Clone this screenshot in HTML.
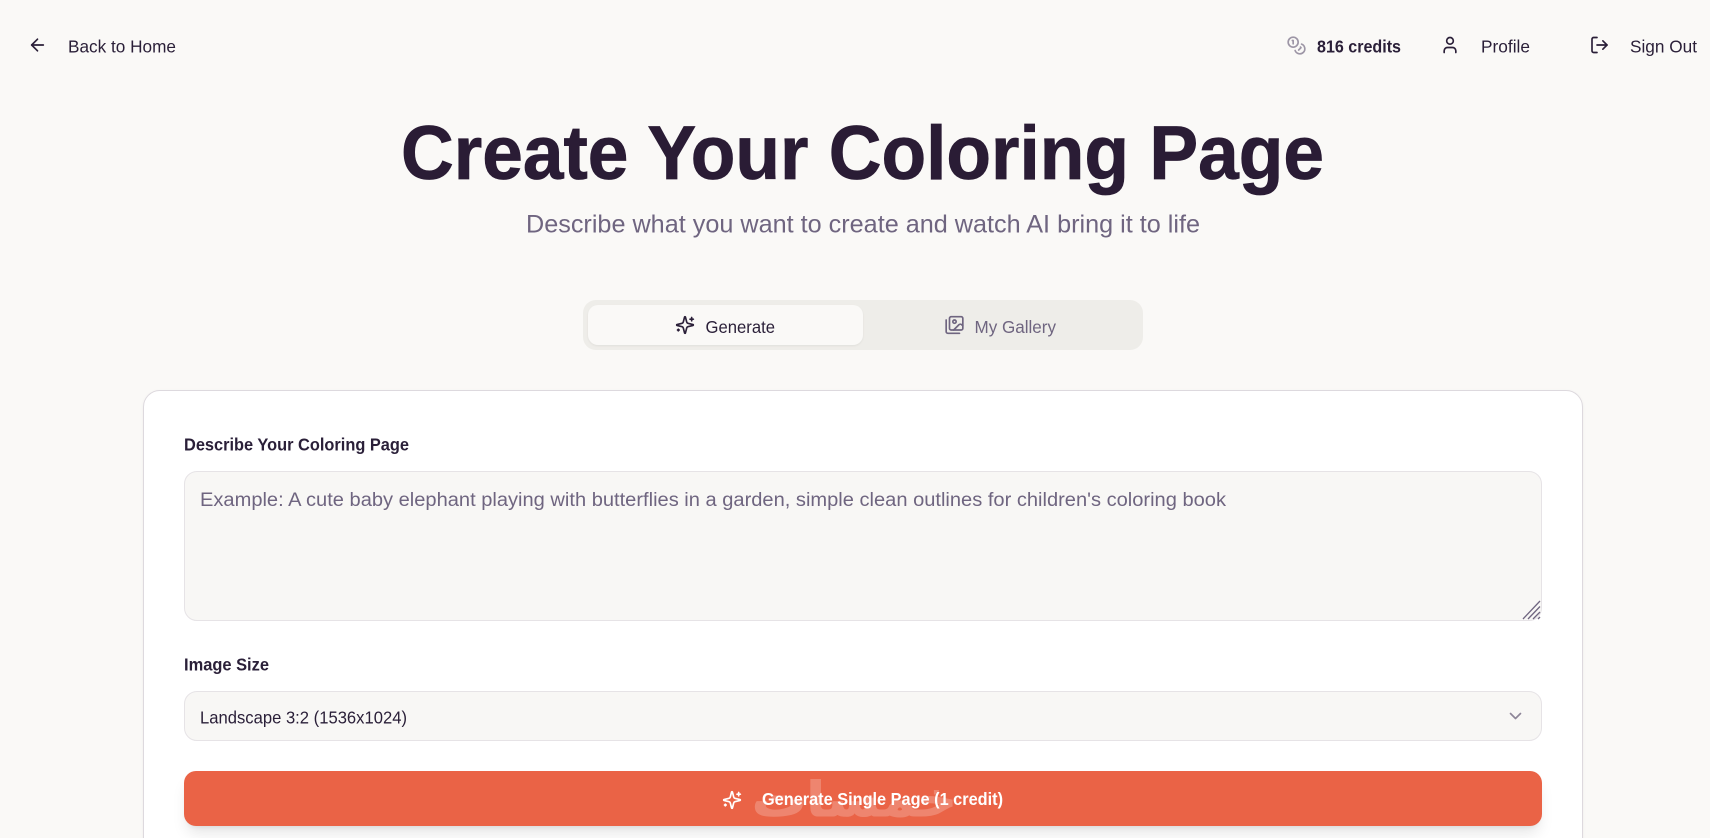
<!DOCTYPE html>
<html lang="en">
<head>
<meta charset="utf-8">
<title>Create Your Coloring Page</title>
<style>
html,body{margin:0;padding:0;background:#faf9f7}
#page{position:relative;width:1710px;height:838px;overflow:hidden;background:#faf9f7}
.box{position:absolute;box-sizing:border-box}
svg{position:absolute;left:0;top:0}
svg text{font-family:"Liberation Sans",sans-serif;fill:#2a1f38}
.ic{fill:none;stroke:#2a1f38;stroke-width:2;stroke-linecap:round;stroke-linejoin:round}
</style>
</head>
<body>
<div id="page">
<div class="box" style="left:583px;top:300px;width:560px;height:50px;background:#eeede9;border-radius:13px"></div>
<div class="box" style="left:588px;top:305px;width:275px;height:40px;background:#faf9f7;border-radius:10px;box-shadow:0 1px 2px rgba(0,0,0,.06)"></div>
<div class="box" style="left:143px;top:390px;width:1440px;height:470px;background:#fff;border:1px solid #ddd9de;border-radius:17px;box-shadow:0 1px 3px rgba(0,0,0,.05)"></div>
<div class="box" style="left:184px;top:471px;width:1358px;height:150px;background:#f8f7f5;border:1px solid #e6e3e6;border-radius:13px"></div>
<div class="box" style="left:184px;top:691px;width:1358px;height:50px;background:#f8f7f5;border:1px solid #e6e3e6;border-radius:13px"></div>
<div class="box" style="left:184px;top:771px;width:1358px;height:55px;background:#ea6346;border-radius:12px;box-shadow:0 10px 15px -3px rgba(0,0,0,.1),0 4px 6px -4px rgba(0,0,0,.1)"></div>

<svg width="1710" height="838" viewBox="0 0 1710 838" xmlns="http://www.w3.org/2000/svg">
<text x="68" y="52.5" font-size="17.5" textLength="108" lengthAdjust="spacingAndGlyphs">Back to Home</text>
<text x="1317" y="52.5" font-size="17.5" font-weight="700" textLength="84" lengthAdjust="spacingAndGlyphs">816 credits</text>
<text x="1481" y="52.5" font-size="17.5" textLength="49" lengthAdjust="spacingAndGlyphs">Profile</text>
<text x="1630" y="52.5" font-size="17.5" textLength="67" lengthAdjust="spacingAndGlyphs">Sign Out</text>

<text x="401" y="179" font-size="76" font-weight="700" stroke="#2a1c35" stroke-width=".8" textLength="923" lengthAdjust="spacingAndGlyphs" style="fill:#2a1c35">Create Your Coloring Page</text>
<text x="526" y="232.5" font-size="25" style="fill:#6f6580" textLength="674" lengthAdjust="spacingAndGlyphs">Describe what you want to create and watch AI bring it to life</text>

<text x="705.5" y="333" font-size="17.5" textLength="69.5" lengthAdjust="spacingAndGlyphs">Generate</text>
<text x="974.5" y="333" font-size="17.5" style="fill:#6f6580" textLength="81.5" lengthAdjust="spacingAndGlyphs">My Gallery</text>

<text x="184" y="450.5" font-size="17.5" font-weight="700" textLength="225" lengthAdjust="spacingAndGlyphs">Describe Your Coloring Page</text>
<text x="200" y="506" font-size="19" style="fill:#6f6580" textLength="1026" lengthAdjust="spacingAndGlyphs">Example: A cute baby elephant playing with butterflies in a garden, simple clean outlines for children's coloring book</text>
<text x="184" y="670.5" font-size="17.5" font-weight="700" textLength="85" lengthAdjust="spacingAndGlyphs">Image Size</text>
<text x="200" y="723.5" font-size="17.5" textLength="207" lengthAdjust="spacingAndGlyphs">Landscape 3:2 (1536x1024)</text>

<text x="957" y="816" font-size="48" font-weight="700" opacity=".22" direction="rtl" textLength="205" lengthAdjust="spacingAndGlyphs" stroke="#fff" stroke-width="1" style="fill:#fff;font-family:'DejaVu Sans',sans-serif">خمسات</text>
<text x="762" y="805" font-size="17.5" font-weight="700" style="fill:#fff" textLength="241" lengthAdjust="spacingAndGlyphs">Generate Single Page (1 credit)</text>

<!-- arrow-left -->
<g class="ic" transform="translate(27.5 35) scale(.8333)"><path d="m12 19-7-7 7-7"/><path d="M19 12H5"/></g>
<!-- coins -->
<g class="ic" transform="translate(1286.5 35.5) scale(.8333)" style="stroke:#9d96a6"><circle cx="8" cy="8" r="6"/><path d="M18.09 10.37A6 6 0 1 1 10.34 18"/><path d="M7 6h1v4"/><path d="m16.71 13.88.7.71-2.82 2.82"/></g>
<!-- user -->
<g class="ic" transform="translate(1440 35) scale(.8333)"><path d="M19 21v-2a4 4 0 0 0-4-4H9a4 4 0 0 0-4 4v2"/><circle cx="12" cy="7" r="4"/></g>
<!-- log-out -->
<g class="ic" transform="translate(1589.5 35) scale(.8333)"><path d="m16 17 5-5-5-5"/><path d="M21 12H9"/><path d="M9 21H5a2 2 0 0 1-2-2V5a2 2 0 0 1 2-2h4"/></g>
<!-- sparkles tab -->
<g class="ic" transform="translate(675 315) scale(.8333)"><path d="M9.937 15.5A2 2 0 0 0 8.5 14.063l-6.135-1.582a.5.5 0 0 1 0-.962L8.5 9.936A2 2 0 0 0 9.937 8.5l1.582-6.135a.5.5 0 0 1 .963 0L14.063 8.5A2 2 0 0 0 15.5 9.937l6.135 1.581a.5.5 0 0 1 0 .964L15.5 14.063a2 2 0 0 0-1.437 1.437l-1.582 6.135a.5.5 0 0 1-.963 0z"/><path d="M20 3v4"/><path d="M22 5h-4"/><path d="M4 17v2"/><path d="M5 18H3"/></g>
<!-- images -->
<g class="ic" transform="translate(944.5 315) scale(.8333)" style="stroke:#6f6580"><path d="M18 22H4a2 2 0 0 1-2-2V6"/><path d="m22 13-1.296-1.296a2.41 2.41 0 0 0-3.408 0L11 18"/><circle cx="12" cy="8" r="2"/><rect width="16" height="16" x="6" y="2" rx="2"/></g>
<!-- chevron -->
<g class="ic" transform="translate(1505.5 706) scale(.8333)" style="stroke:#8d8598"><path d="m6 9 6 6 6-6"/></g>
<!-- sparkles button -->
<g class="ic" transform="translate(722 790) scale(.8333)" style="stroke:#fff"><path d="M9.937 15.5A2 2 0 0 0 8.5 14.063l-6.135-1.582a.5.5 0 0 1 0-.962L8.5 9.936A2 2 0 0 0 9.937 8.5l1.582-6.135a.5.5 0 0 1 .963 0L14.063 8.5A2 2 0 0 0 15.5 9.937l6.135 1.581a.5.5 0 0 1 0 .964L15.5 14.063a2 2 0 0 0-1.437 1.437l-1.582 6.135a.5.5 0 0 1-.963 0z"/><path d="M20 3v4"/><path d="M22 5h-4"/><path d="M4 17v2"/><path d="M5 18H3"/></g>
<!-- resize handle -->
<g stroke="#6f6580" stroke-width="1.3" fill="none"><path d="M1523 619 1540 601"/><path d="M1528 619 1540 606.5"/><path d="M1533 619 1540 612"/><path d="M1538 619 1540 617"/></g>
</svg>
</div>
</body>
</html>
